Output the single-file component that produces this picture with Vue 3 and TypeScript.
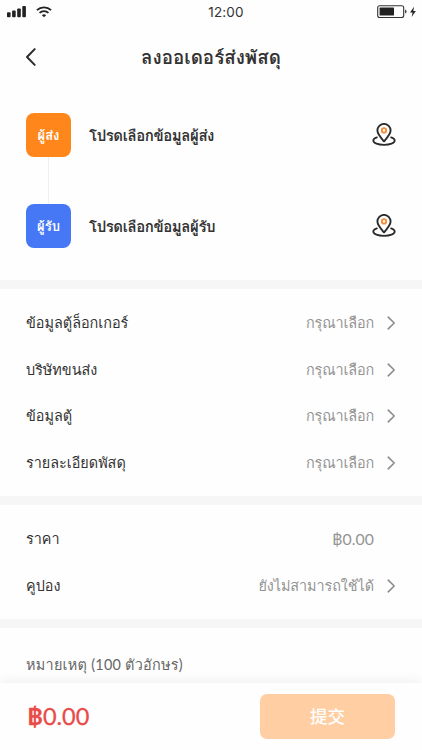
<script setup lang="ts">
interface Contact {
  tag: string
  text: string
  kind: string
}
interface Row {
  label: string
  value: string
  arrow: boolean
  cls: string
}

const contacts: Contact[] = [
  { tag: 'ผู้ส่ง', text: 'โปรดเลือกข้อมูลผู้ส่ง', kind: 'sender' },
  { tag: 'ผู้รับ', text: 'โปรดเลือกข้อมูลผู้รับ', kind: 'receiver' },
]

const groups: Row[][] = [
  [
    { label: 'ข้อมูลตู้ล็อกเกอร์', value: 'กรุณาเลือก', arrow: true, cls: 'locker' },
    { label: 'บริษัทขนส่ง', value: 'กรุณาเลือก', arrow: true, cls: 'carrier' },
    { label: 'ข้อมูลตู้', value: 'กรุณาเลือก', arrow: true, cls: 'cabinet' },
    { label: 'รายละเอียดพัสดุ', value: 'กรุณาเลือก', arrow: true, cls: 'parcel' },
  ],
  [
    { label: 'ราคา', value: '฿0.00', arrow: false, cls: 'price' },
    { label: 'คูปอง', value: 'ยังไม่สามารถใช้ได้', arrow: true, cls: 'coupon' },
  ],
]
</script>

<template>
  <div class="screen">
    <div class="status">
      <div class="left">
        <svg class="signal" width="19" height="12" viewBox="0 0 19 12">
          <rect x="0" y="6.3" width="3.6" height="4.9" rx=".9" />
          <rect x="5.1" y="4.6" width="3.6" height="6.6" rx=".9" />
          <rect x="10.2" y="2.4" width="3.6" height="8.8" rx=".9" />
          <rect x="15.3" y="0" width="3.6" height="11.2" rx=".9" />
        </svg>
        <svg class="wifi" width="16" height="12" viewBox="0 0 16 12">
          <path d="M.9 4.2a10.3 10.3 0 0 1 14.2 0M3.5 6.9a6.7 6.7 0 0 1 9 0" fill="none" stroke="#222" stroke-width="1.8" />
          <path d="M5.9 9.2a3.3 3.3 0 0 1 4.2 0L8 11.3z" />
        </svg>
      </div>
      <span class="time">12:00</span>
      <div class="right">
        <svg width="40" height="14" viewBox="0 0 40 14">
          <rect x=".7" y=".7" width="26" height="11.8" rx="2" fill="none" stroke="#333" stroke-width="1.1" />
          <rect x="2.6" y="2.6" width="14.4" height="8" rx=".6" />
          <path d="M28.2 4.6q1.3.4 1.3 2t-1.3 2z" />
          <path d="M37 1.7 33 7.5h2.6l-1 4.5 4.2-6.1h-2.5z" />
        </svg>
      </div>
    </div>

    <header class="nav">
      <svg class="back" width="12" height="20" viewBox="0 0 12 20">
        <path d="M9.7 2.1 2 10l7.7 7.9" fill="none" stroke="#2b2b2b" stroke-width="2" stroke-linecap="round" stroke-linejoin="round" />
      </svg>
      <h1><span>ลงออเดอร์ส่งพัสดุ</span></h1>
    </header>

    <section class="contacts">
      <div v-for="c in contacts" :key="c.kind" class="contact" :class="c.kind">
        <div class="tag"><span>{{ c.tag }}</span></div>
        <div class="who"><span>{{ c.text }}</span></div>
        <svg class="pin" width="24" height="24" viewBox="0 0 24 24" fill="none">
          <path d="M4.9 14.3c-2.2.7-3.6 1.8-3.6 3.2 0 2.6 4.8 4.4 10.7 4.4s10.7-1.8 10.7-4.4c0-1.4-1.4-2.5-3.6-3.2" stroke="#2b2b2b" stroke-width="1.8" stroke-linecap="round" />
          <path d="M12 18.4C9.2 15.2 5.4 11 5.4 7.5a6.6 6.6 0 0 1 13.2 0c0 3.5-3.8 7.7-6.6 10.9z" fill="#fff" stroke="#2b2b2b" stroke-width="1.9" stroke-linejoin="round" />
          <circle cx="12" cy="7.4" r="2.2" stroke="#f68a35" stroke-width="1.8" />
        </svg>
      </div>
    </section>

    <section v-for="(rows, i) in groups" :key="i" class="group">
      <div v-for="r in rows" :key="r.label" class="row" :class="r.cls">
        <span class="label">{{ r.label }}</span>
        <span class="value">{{ r.value }}</span>
        <svg class="chev" width="10" height="14" viewBox="0 0 10 14">
          <path v-if="r.arrow" d="M2.2 1.2 8.2 7l-6 5.8" fill="none" stroke="#8c8c8c" stroke-width="1.6" stroke-linecap="round" stroke-linejoin="round" />
        </svg>
      </div>
    </section>

    <section class="note"><span>หมายเหตุ (100 ตัวอักษร)</span></section>

    <footer class="bar">
      <div class="total"><b>฿</b><span>0.00</span></div>
      <button class="submit" type="button">提交</button>
    </footer>
  </div>
</template>

<style>
body {
  margin: 0;
  background: #fff;
}
</style>

<style scoped>
.screen {
  width: 422px;
  height: 750px;
  overflow: hidden;
  display: flex;
  flex-direction: column;
  background: #fefefe;
  color: #333;
  font-family: Lato, Loma, "Noto Sans Thai Looped", "Noto Sans CJK SC", sans-serif;
  font-size: 14.4px;
  white-space: nowrap;
}
.screen svg {
  display: block;
  flex: none;
}
.status {
  flex: none;
  display: grid;
  grid-template-columns: 1fr auto 1fr;
  align-items: center;
  height: 24px;
  padding: 0 5px 0 7px;
  fill: #222;
}
.left {
  display: flex;
  align-items: center;
  gap: 10px;
}
.time {
  margin: 0 0 1px 28px;
  font: 13.5px Inter, sans-serif;
  letter-spacing: .15px;
}
.right {
  justify-self: end;
}
.nav {
  flex: none;
  display: grid;
  grid-template-columns: 12px 1fr 12px;
  align-items: center;
  height: 66px;
  padding: 0 25px;
}
h1 {
  margin: 0 0 1px;
  text-align: center;
  font-size: 18.8px;
  line-height: 30px;
  font-weight: 700;
}
.contacts {
  flex: none;
  display: flex;
  flex-direction: column;
  height: 167px;
  padding: 23px 26px 0;
  gap: 47px;
}
.contact {
  display: flex;
  align-items: center;
  height: 44px;
}
.tag {
  position: relative;
  display: flex;
  align-items: center;
  justify-content: center;
  width: 45px;
  height: 44px;
  border-radius: 8px;
  background: #ff861b;
  color: #fff;
  font-size: 13px;
  font-weight: 700;
}
.receiver .tag {
  background: #4677f5;
}
.sender .tag::after {
  content: "";
  position: absolute;
  top: 44px;
  left: 22px;
  width: 1px;
  height: 47px;
  background: #f0f0f0;
}
.who {
  flex: 1;
  padding: 2px 0 0 18px;
  font-size: 15px;
  font-weight: 700;
  letter-spacing: -.42px;
}
.group {
  flex: none;
  padding: 11px 26px 10px;
  border-top: 9px solid #f6f6f6;
}
.row {
  display: flex;
  align-items: center;
  height: 46.5px;
}
.label,
.value {
  margin-bottom: 1px;
}
.value {
  margin-left: auto;
  margin-right: 12px;
  color: #949494;
  letter-spacing: -.12px;
}
.price .value {
  font-size: 15.8px;
  letter-spacing: .05px;
}
.coupon .value {
  letter-spacing: -.06px;
}
.note {
  flex: 1;
  padding: 25px 26px 0;
  border-top: 9px solid #f6f6f6;
  color: #666;
  line-height: 24px;
  letter-spacing: .28px;
}
.bar {
  flex: none;
  position: relative;
  display: flex;
  align-items: center;
  justify-content: space-between;
  height: 67px;
  padding: 0 27px 0 27px;
  background: #fefefe;
  box-shadow: 0 -2px 12px rgba(0, 0, 0, .06);
}
.total {
  margin-bottom: 2px;
  color: #e94b48;
  font-size: 23.5px;
  -webkit-text-stroke: .3px #e94b48;
}
.submit {
  width: 135px;
  height: 45px;
  padding: 0 0 2px;
  border: 0;
  border-radius: 7px;
  background: #ffcea3;
  color: #fff;
  font: 500 17.5px "Noto Sans CJK SC", sans-serif;
}
</style>
